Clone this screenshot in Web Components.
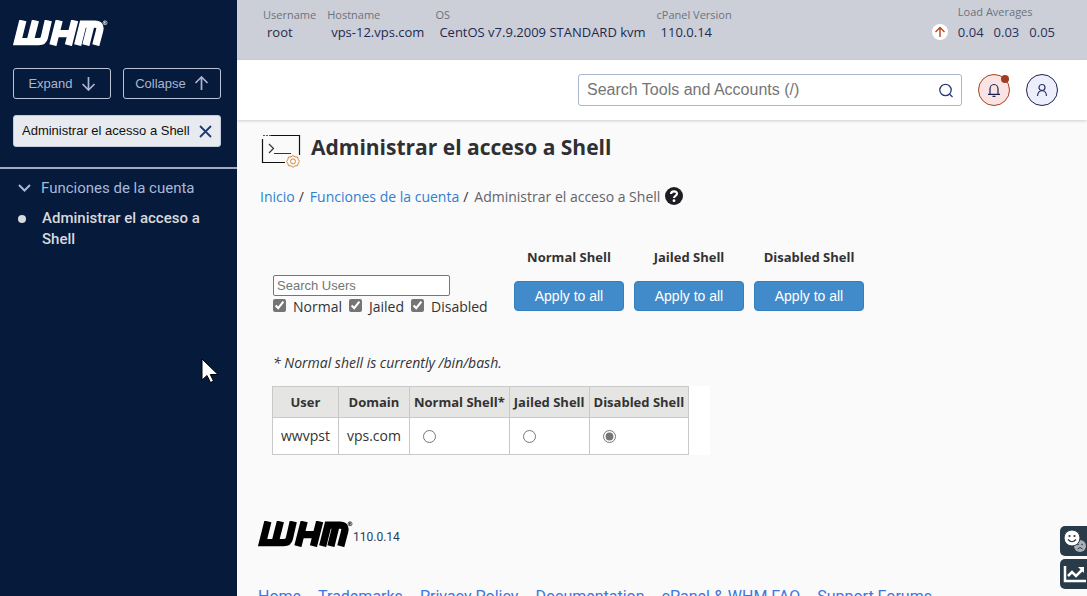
<!DOCTYPE html>
<html lang="es">
<head>
<meta charset="utf-8">
<meta name="viewport" content="width=device-width, initial-scale=1">
<title>Administrar el acceso a Shell - WHM</title>
<style>
html, body { height: 100%; margin: 0; }
body { background: #fafafa; color: #333; font: 14px/20px "Open Sans", sans-serif; overflow: hidden; }
</style>
</head>
<body>
<whm-app></whm-app>
<script>
const define = (name, html) => {
  const t = document.createElement('template');
  t.innerHTML = '<style>*{box-sizing:border-box}</style>' + html;
  customElements.define(name, class extends HTMLElement {
    constructor() {
      super();
      this.attachShadow({ mode: 'open' }).append(t.content.cloneNode(true));
    }
  });
};

define('whm-logo', `
<style>
:host { display: block; width: 95px; height: 26px; flex: none; }
svg { display: block; width: 100%; height: 100%; }
</style>
<svg viewBox="0 0 288 78" role="img" aria-label="WHM" fill="none" stroke="currentColor" stroke-width="22">
  <path d="M30 1 L14 65 H78 Q92 65 95 53 L107 1"/>
  <path d="M68 1 L53 60"/>
  <path d="M140 1 L121 76 M187 1 L168 76 M133 41 H176"/>
  <path d="M196 76 L212 12 H248 Q267 12 263 30 L251 76 M236 16 L221 76"/>
  <g stroke-width="2"><circle cx="279" cy="8" r="6"/><path d="M277 11 V5 H280 Q282 8 277 8 L281 11"/></g>
</svg>`);

define('nav-button', `
<style>
:host { display: block; flex: 1; }
button { width: 100%; height: 31px; display: flex; align-items: center; justify-content: center; gap: 8px; padding: 0;
  background: transparent; border: 1px solid #bcc3d6; border-radius: 3px; color: #aab5d0; font: 13px/16px "Liberation Sans", sans-serif; }
</style>
<button type="button"><slot></slot><slot name="icon"></slot></button>`);

define('whm-sidebar', `
<style>
:host { display: block; background: #061a3c; color: #a9b8d8; font: 15px/21px Roboto, sans-serif; }
.top { padding: 20px 16px 20px 13px; border-bottom: 2px solid #a5a9b8; }
whm-logo { color: #fff; }
.buttons { display: flex; gap: 12px; margin: 22px 0 16px; }
.filter { display: flex; align-items: center; height: 32px; background: #e7eaee; border: 1px solid #c3cbdc; border-radius: 3px; padding-right: 8px; }
.filter input { flex: 1; min-width: 0; border: 0; background: none; padding: 0 0 0 8px; color: #111; font: 13px/16px "Liberation Sans", sans-serif; outline: 0; }
.filter button { border: 0; background: none; padding: 0; display: flex; }
nav { padding: 9px 16px 0; }
a { color: inherit; text-decoration: none; }
.group, .item { display: grid; grid-template-columns: 25px 1fr; }
.group svg { margin: 5px 0 0 2px; }
.item { grid-template-columns: 26px 1fr; margin-top: 9px; color: #d8d9dc; font-weight: 500; }
.item i { width: 8px; height: 8px; border-radius: 50%; background: currentColor; margin: 7px 0 0 2px; }
</style>
<div class="top">
  <whm-logo></whm-logo>
  <div class="buttons">
    <nav-button>Expand<svg slot="icon" width="15" height="15" viewBox="0 0 15 15" fill="none" stroke="currentColor" stroke-width="1.7"><path d="M7.5 1v13M1.5 8l6 6 6-6"/></svg></nav-button>
    <nav-button>Collapse<svg slot="icon" width="15" height="15" viewBox="0 0 15 15" fill="none" stroke="currentColor" stroke-width="1.7"><path d="M7.5 14V1M1.5 7l6-6 6 6"/></svg></nav-button>
  </div>
  <div class="filter">
    <input type="text" aria-label="Filter tools" value="Administrar el acesso a Shell">
    <button type="button" aria-label="Clear"><svg width="13" height="13" viewBox="0 0 13 13" fill="none" stroke="#1e3a75" stroke-width="1.8"><path d="M1 1l11 11M12 1L1 12"/></svg></button>
  </div>
</div>
<nav>
  <a class="group" href="#funciones"><svg width="13" height="10" viewBox="0 0 13 10" fill="none" stroke="currentColor" stroke-width="2"><path d="M1 2l5.500 5.500L12 2"/></svg><span>Funciones de la cuenta</span></a>
  <a class="item" href="#shell"><i></i><span>Administrar el acceso a Shell</span></a>
</nav>`);

define('info-item', `
<style>
:host { display: block; white-space: nowrap; }
.label { font-size: 11px; line-height: 16px; color: #6b7280; }
.value { font-size: 13px; line-height: 18px; color: #1d2a50; padding-left: 4px; }
</style>
<div class="label"><slot name="label"></slot></div><div class="value"><slot></slot></div>`);

define('server-info', `
<style>
:host { display: flex; height: 60px; background: #cdcfd8; padding: 7px 32px 0 26px; }
.facts { display: flex; flex: 1; gap: 11px; }
.load { display: flex; align-items: center; gap: 10px; height: 33px; color: #2a3158; font-size: 13px; line-height: 18px; white-space: nowrap; }
.load dl { margin: -3px 0 0; }
dt { font-size: 11px; line-height: 16px; color: #6b7280; }
dd { margin: 0; padding-top: 3px; display: flex; gap: 10px; }
.load > svg { align-self: flex-end; }
</style>
<div class="facts">
  <info-item><span slot="label">Username</span>root</info-item>
  <info-item><span slot="label">Hostname</span>vps-12.vps.com</info-item>
  <info-item><span slot="label">OS</span>CentOS v7.9.2009 STANDARD kvm</info-item>
  <info-item><span slot="label">cPanel Version</span>110.0.14</info-item>
</div>
<div class="load">
  <svg width="16" height="16" viewBox="0 0 16 16" aria-hidden="true"><circle cx="8" cy="8" r="8" fill="#fff"/><path d="M8 13V3.500M3.500 8L8 3.500 12.500 8" fill="none" stroke="#b3491c" stroke-width="1.400"/></svg>
  <dl><dt>Load Averages</dt><dd><span>0.04</span><span>0.03</span><span>0.05</span></dd></dl>
</div>`);

define('round-button', `
<style>
:host { display: block; position: relative; --line: #1b2352; --fill: #eceefb; }
:host([alert]) { --line: #a8431f; --fill: #f9e3e3; }
button { width: 32px; height: 32px; display: flex; align-items: center; justify-content: center; padding: 0; border: 1px solid var(--line); border-radius: 50%; background: var(--fill); }
.dot { display: none; position: absolute; right: 1px; top: 1px; width: 8px; height: 8px; border-radius: 50%; background: #a23c25; }
:host([alert]) .dot { display: block; }
</style>
<button type="button"><slot></slot></button><span class="dot"></span>`);

define('search-bar', `
<style>
:host { display: flex; justify-content: flex-end; align-items: center; gap: 16px; height: 60px; padding: 0 29px 0 16px; background: #fff; box-shadow: 0 1px 3px rgba(0,0,0,.18); position: relative; }
form { display: flex; align-items: center; flex: 0 1 384px; height: 32px; border: 1px solid #aab5cf; border-radius: 3px; padding-right: 8px; background: #fff; }
input { flex: 1; min-width: 0; border: 0; padding: 0 0 0 8px; background: none; outline: 0; font: 16px/20px "Liberation Sans", sans-serif; }
input::placeholder { color: #757575; opacity: 1; }
form button { border: 0; background: none; padding: 0; display: flex; }
</style>
<form>
  <input type="text" aria-label="Search" placeholder="Search Tools and Accounts (/)">
  <button type="button" aria-label="Search"><svg width="15" height="15" viewBox="0 0 15 15" fill="none" stroke="#293b78" stroke-width="1.300"><circle cx="7.500" cy="7" r="5.700"/><path d="M11.500 11l3 3"/></svg></button>
</form>
<round-button alert><svg width="14" height="14" viewBox="0 0 14 14" fill="none" stroke="#1b2352" stroke-width="1.200"><path d="M1 11.300h12M3 11V6a4 4.500 0 0 1 8 0v5M5.500 13.400h3"/></svg></round-button>
<round-button><svg width="14" height="14" viewBox="0 0 14 14" fill="none" stroke="#2b3566" stroke-width="1.200"><circle cx="7" cy="4.500" r="3"/><path d="M2.500 13c0-3.300 2-5.400 4.500-5.400s4.500 2.100 4.500 5.400"/></svg></round-button>`);

define('page-heading', `
<style>
:host { display: block; }
.title { display: flex; gap: 10px; align-items: flex-start; padding-left: 1px; }
h1 { margin: 0; font-size: 21px; line-height: 30px; font-weight: 700; color: #2f3033; }
.title svg { margin-top: 2px; flex: none; }
nav { display: flex; align-items: center; gap: 4px; margin-top: 19px; font-size: 14px; line-height: 20px; color: #63646a; }
nav a { color: #2f7fd0; text-decoration: none; }
nav b { font-weight: 400; color: #333; margin-right: 2px; }
nav button { border: 0; padding: 0; background: none; display: flex; margin: 0 0 2px 1px; }
</style>
<div class="title">
  <svg width="40" height="34" viewBox="0 0 40 34" fill="none" aria-hidden="true">
    <path d="M10 1.500h28.500V21M1.500 5v23.500H24" stroke="#111" stroke-width="1.200"/><path d="M2 1.500h8" stroke="#555" stroke-dasharray="2 1"/><path d="M8 10l4.500 4.500L8 19M13 19.500h17" stroke="#333" stroke-width="1.200"/>
    <path d="M32 21.500l2 1.400 2.500.1.700 2.400 1.200 2-1.200 2-.7 2.300-2.500.1-2 1.500-2-1.500-2.500-.1-.7-2.300-1.200-2 1.200-2 .7-2.400 2.500-.1z" stroke="#d58a37"/><circle cx="32" cy="27.400" r="2.500" stroke="#d58a37"/>
  </svg>
  <h1>Administrar el acceso a Shell</h1>
</div>
<nav aria-label="Breadcrumb">
  <a href="#inicio">Inicio</a><b>/</b><a href="#funciones">Funciones de la cuenta</a><b>/</b><span>Administrar el acceso a Shell</span>
  <button type="button" aria-label="Help"><svg width="18" height="18" viewBox="0 0 18 18"><circle cx="9" cy="9" r="9" fill="#1d1d24"/><path d="M6 7C6 3.500 12 3.500 12 6.800 12 9 9 8.700 9 11" fill="none" stroke="#fff" stroke-width="2.200"/><circle cx="9" cy="13.700" r="1.400" fill="#fff"/></svg></button>
</nav>`);

define('apply-column', `
<style>
:host { display: block; width: 110px; text-align: center; }
strong { display: block; font-size: 13px; line-height: 20px; white-space: nowrap; }
button { width: 100%; height: 30px; margin-top: 14px; padding: 0; border: 1px solid #357ebd; border-radius: 4px; background: #428bca; color: #fff; font: 14px/20px "Liberation Sans", sans-serif; }
</style>
<strong><slot></slot></strong><button type="button">Apply to all</button>`);

define('user-filters', `
<style>
:host { display: flex; gap: 26px; }
.find { width: 215px; padding-top: 28px; }
input[type=search] { display: block; width: 177px; height: 21px; margin: 0; border: 1px solid #767676; border-radius: 2px; padding: 0 3px; background: #fff; font: 13px/16px "Liberation Sans", sans-serif; }
input::placeholder { color: #757575; opacity: 1; }
.checks { display: flex; gap: 7px; margin-top: 1px; white-space: nowrap; }
label { display: flex; gap: 7px; line-height: 20px; }
input[type=checkbox] { width: 13px; height: 13px; margin: 2px 0 0; accent-color: #757575; }
.apply { display: flex; gap: 10px; }
</style>
<div class="find">
  <input type="search" placeholder="Search Users" aria-label="Search Users">
  <div class="checks">
    <label><input type="checkbox" checked>Normal</label>
    <label><input type="checkbox" checked>Jailed</label>
    <label><input type="checkbox" checked>Disabled</label>
  </div>
</div>
<div class="apply"><apply-column>Normal Shell</apply-column><apply-column>Jailed Shell</apply-column><apply-column>Disabled Shell</apply-column></div>`);

define('shell-table', `
<style>
:host { display: block; width: 438px; background: #fff; }
table { border-collapse: collapse; }
th, td { border: 1px solid #c9c9c9; padding: 0 8px; font-size: 14px; line-height: 20px; white-space: nowrap; }
th { background: #e5e5e3; height: 31px; padding: 0 4px; font-size: 13px; }
td { height: 37px; }
td:nth-child(n+3) { padding-left: 13px; }
input { display: block; width: 13px; height: 13px; margin: 0; accent-color: #757575; }
</style>
<table>
  <thead><tr><th scope="col">User</th><th scope="col">Domain</th><th scope="col">Normal Shell*</th><th scope="col">Jailed Shell</th><th scope="col">Disabled Shell</th></tr></thead>
  <tbody><tr><td>wwvpst</td><td>vps.com</td>
    <td><input type="radio" name="shell" aria-label="Normal Shell"></td>
    <td><input type="radio" name="shell" aria-label="Jailed Shell"></td>
    <td><input type="radio" name="shell" aria-label="Disabled Shell" checked></td></tr></tbody>
</table>`);

define('page-footer', `
<style>
:host { display: block; }
.brand { display: flex; align-items: center; font-size: 12px; line-height: 16px; color: #263e60; }
.brand span { padding-top: 6px; font-family: Roboto, sans-serif; }
whm-logo { color: #000; }
nav { display: flex; gap: 17px; margin-top: 40px; font: 16px/20px Roboto, sans-serif; white-space: nowrap; }
a { color: #3f76e0; text-decoration: none; }
</style>
<div class="brand"><whm-logo></whm-logo><span>110.0.14</span></div>
<nav aria-label="Footer"><a href="#home">Home</a><a href="#tm">Trademarks</a><a href="#privacy">Privacy Policy</a><a href="#docs">Documentation</a><a href="#faq">cPanel &amp; WHM FAQ</a><a href="#forums">Support Forums</a></nav>`);

define('side-widgets', `
<style>
:host { position: fixed; right: 0; bottom: 7px; display: grid; gap: 3px; }
button { width: 27px; height: 30px; padding: 0; border: 0; border-radius: 5px 0 0 5px; background: #293b49; display: block; }
svg { display: block; }
</style>
<button type="button" aria-label="Feedback"><svg width="27" height="30" viewBox="0 0 27 30"><circle cx="20" cy="20" r="6" fill="#a9b0b6"/><path d="M17.500 23q2.500-3 5 0" fill="none" stroke="#293b49"/><circle cx="18" cy="18.500" r=".8" fill="#293b49"/><circle cx="22" cy="18.500" r=".8" fill="#293b49"/><circle cx="12" cy="12" r="8" fill="#fff" stroke="#293b49"/><circle cx="9.500" cy="10" r="1.100" fill="#293b49"/><circle cx="14.500" cy="10" r="1.100" fill="#293b49"/><path d="M8 13.500q4 4.500 8 0" fill="none" stroke="#293b49" stroke-width="1.200"/></svg></button>
<button type="button" aria-label="Statistics"><svg width="27" height="30" viewBox="0 0 27 30" fill="none" stroke="#fff" stroke-width="2.500"><path d="M5 7v15h21M8 17l4-4 4 4 6-6"/><path d="M18 8h6v6z" fill="#fff" stroke="none"/></svg></button>`);

define('mouse-pointer', `
<style>:host { position: fixed; left: 201px; top: 358px; pointer-events: none; } svg { display: block; }</style>
<svg width="18" height="26" viewBox="0 0 18 26"><path d="M1 1v21l5-4.500 3.500 7 3-1.500-3.200-6.500H17z" fill="#fff" stroke="#000"/></svg>`);

define('whm-app', `
<style>
:host { display: grid; grid-template-columns: 237px 1fr; height: 100vh; }
.page { min-width: 0; overflow: hidden auto; scrollbar-width: none; }
main { padding: 12px 24px 24px 23px; }
section { padding-left: 13px; margin-top: 40px; }
.note { margin: 36px 0 13px; font-style: italic; font-size: 14px; line-height: 20px; }
shell-table { margin-left: -1px; }
page-footer { margin: 66px 0 0 -2px; }
</style>
<whm-sidebar></whm-sidebar>
<div class="page">
  <server-info></server-info>
  <search-bar></search-bar>
  <main>
    <page-heading></page-heading>
    <section>
      <user-filters></user-filters>
      <p class="note">* Normal shell is currently /bin/bash.</p>
      <shell-table></shell-table>
    </section>
    <page-footer></page-footer>
  </main>
</div>
<side-widgets></side-widgets>
<mouse-pointer></mouse-pointer>`);
</script>
</body>
</html>
